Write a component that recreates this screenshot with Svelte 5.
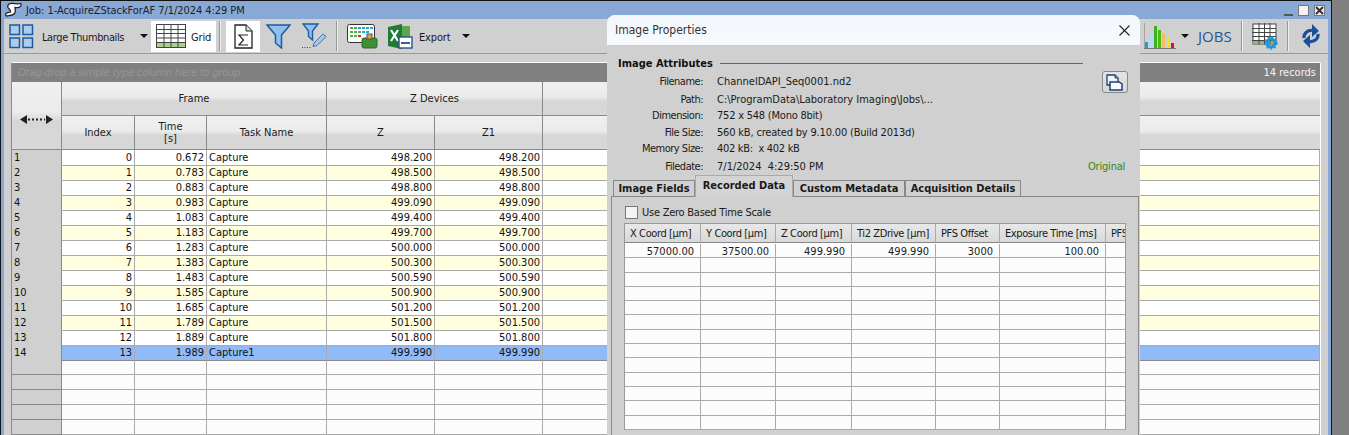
<script>
  const rows = [
    [0, "0.672", "Capture", "498.200"],
    [1, "0.783", "Capture", "498.500"],
    [2, "0.883", "Capture", "498.800"],
    [3, "0.983", "Capture", "499.090"],
    [4, "1.083", "Capture", "499.400"],
    [5, "1.183", "Capture", "499.700"],
    [6, "1.283", "Capture", "500.000"],
    [7, "1.383", "Capture", "500.300"],
    [8, "1.483", "Capture", "500.590"],
    [9, "1.585", "Capture", "500.900"],
    [10, "1.685", "Capture", "501.200"],
    [11, "1.789", "Capture", "501.500"],
    [12, "1.889", "Capture", "501.800"],
    [13, "1.989", "Capture1", "499.990"]
  ];
  const blanks = [0, 1, 2, 3, 4];
  const attrs = [
    ["Filename:", "ChannelDAPI_Seq0001.nd2"],
    ["Path:", "C:\\ProgramData\\Laboratory Imaging\\Jobs\\..."],
    ["Dimension:", "752 x 548 (Mono 8bit)"],
    ["File Size:", "560 kB, created by 9.10.00 (Build 2013d)"],
    ["Memory Size:", "402 kB:  x 402 kB"],
    ["Filedate:", "7/1/2024  4:29:50 PM"]
  ];
  const tabs = ["Image Fields", "Recorded Data", "Custom Metadata", "Acquisition Details"];
  const recCols = ["X Coord [µm]", "Y Coord [µm]", "Z Coord [µm]", "Ti2 ZDrive [µm]", "PFS Offset", "Exposure Time [ms]", "PFS"];
  const recRow = ["57000.00", "37500.00", "499.990", "499.990", "3000", "100.00", ""];
  const recBlanks = [0, 1, 2, 3, 4, 5, 6, 7, 8, 9, 10, 11];
</script>

<div class="page">
  <div class="window">
    <div class="titlebar">
      <svg class="app-icon" width="17" height="16" viewBox="0 0 17 16">
        <path d="M4 2C7 0 12 3 15 1.500c1.200-.5 1.500 2 .5 3-2 1.500-3.500 1-5.500 1 0 2 1 4-.5 6-1.500 2-5 2-7.500 2.500-1.500 0-2-2-.5-3 1.500-.8 2.500-.5 4-1 .5-2-1.500-3-2.500-4.500C2.800 5 2.800 3 4 2z" fill="#fff" stroke="#222" stroke-width="1.300" />
      </svg>
      <span class="job">Job: 1-AcquireZStackForAF 7/1/2024 4:29 PM</span>
      <div class="winbtns">
        <i class="min"></i>
        <i class="max"></i>
        <i class="close">
          <svg width="9" height="9" viewBox="0 0 9 9"><path d="M1 1l7 7M8 1L1 8" stroke="#333" stroke-width="2" /></svg>
        </i>
      </div>
    </div>

    <div class="toolbar">
      <svg class="thumbs" width="25" height="25" viewBox="0 0 25 25">
        <g fill="#a8cdf0" stroke="#1f5a9e" stroke-width="1.500">
          <rect x="1" y="1" width="9.500" height="9.500" />
          <rect x="14" y="1" width="9.500" height="9.500" />
          <rect x="1" y="14" width="9.500" height="9.500" />
          <rect x="14" y="14" width="9.500" height="9.500" />
        </g>
      </svg>
      <span class="tb-label large">Large Thumbnails</span>
      <b class="caret c1"></b>
      <div class="grid-btn">
        <svg width="30" height="24" viewBox="0 0 30 24">
          <rect x="0.500" y="0.500" width="29" height="23" fill="#fff" stroke="#444" />
          <rect x="1" y="18" width="28" height="5" fill="#a9d18e" />
          <path d="M0 5.500h30M0 9.500h30M0 14h30M0 18.500h30M8 0v24M15 0v24M22 0v24" stroke="#444" />
        </svg>
        <span class="tb-label">Grid</span>
      </div>
      <i class="tb-sep s1"></i>
      <div class="sigma-btn">
        <svg width="19" height="25" viewBox="0 0 19 25">
          <path d="M1 1h11l6 6v17H1z" fill="#fff" stroke="#222" stroke-width="1.300" />
          <path d="M12 1v6h6" fill="#ddd" stroke="#222" />
          <path d="M14 11H5l4.500 5L5 21h9" fill="none" stroke="#222" stroke-width="1.200" />
        </svg>
      </div>
      <svg class="funnel" width="25" height="25" viewBox="0 0 25 25">
        <path d="M1 1h23l-8.500 10v13l-6-5V11z" fill="#8fc0f0" stroke="#1f5a9e" stroke-width="1.500" />
      </svg>
      <svg class="funnel2" width="26" height="26" viewBox="0 0 26 26">
        <path d="M1 1h15l-5.500 7v9l-4-3.500V8z" fill="#8fc0f0" stroke="#1f5a9e" stroke-width="1.400" />
        <path d="M12 20l9-9 3 2.500-9 9-4 1z" fill="#a8c8ee" stroke="#4a6f9e" />
        <path d="M0 24.500h9" stroke="#444" stroke-dasharray="1 1.500" />
      </svg>
      <i class="tb-sep s2"></i>
      <svg class="plate" width="31" height="26" viewBox="0 0 31 26">
        <rect x="0.500" y="1.500" width="27" height="18" rx="2" fill="#fff" stroke="#333" />
        <g fill="#4fb04a">
          <rect x="3" y="4" width="3" height="2" /><rect x="7" y="4" width="3" height="2" /><rect x="3" y="8" width="3" height="2" /><rect x="7" y="8" width="3" height="2" /><rect x="11" y="8" width="3" height="2" /><rect x="3" y="12" width="3" height="2" /><rect x="7" y="12" width="3" height="2" />
        </g>
        <g fill="#28a8d8">
          <rect x="11" y="4" width="3" height="2" /><rect x="15" y="4" width="3" height="2" /><rect x="19" y="4" width="3" height="2" /><rect x="23" y="4" width="3" height="2" /><rect x="15" y="8" width="3" height="2" /><rect x="19" y="8" width="3" height="2" />
        </g>
        <rect x="11" y="12" width="3" height="2" fill="#e02030" />
        <rect x="15" y="15" width="15" height="10" rx="2" fill="#3f8f36" stroke="#2a6a24" />
        <rect x="20" y="11" width="5" height="5" fill="#e0a040" stroke="#555" />
      </svg>
      <svg class="excel" width="25" height="25" viewBox="0 0 25 25">
        <path d="M0 3l14-3v25L0 22z" fill="#1e7a34" />
        <rect x="14" y="2" width="8" height="14" fill="#5ba84a" />
        <path d="M3 6l7 11M10 6L3 17" stroke="#fff" stroke-width="2.200" />
        <rect x="11" y="13" width="13" height="11" fill="#fff" stroke="#2a4f8f" stroke-width="1.400" />
        <rect x="13" y="18" width="9" height="2" fill="#2a5faf" />
      </svg>
      <span class="tb-label export">Export</span>
      <b class="caret c2"></b>

      <div class="tb-right">
        <svg width="32" height="26" viewBox="0 0 32 26">
          <rect x="1" y="19" width="3" height="6" fill="#1fa0d8" />
          <rect x="5" y="11" width="4" height="14" fill="#b8d8f8" />
          <rect x="10" y="3" width="3" height="22" fill="#3fb020" />
          <rect x="14" y="7" width="3" height="18" fill="#50b818" />
          <rect x="18" y="11" width="3" height="14" fill="#f0c060" />
          <rect x="23" y="15" width="3" height="10" fill="#f8e020" />
          <rect x="27" y="20" width="3" height="5" fill="#e01020" />
          <path d="M0 0v26M0 25.500h32" stroke="#777" />
        </svg>
        <b class="caret c3"></b>
        <span class="jobs">JOBS</span>
        <i class="tb-sep"></i>
        <svg width="27" height="27" viewBox="0 0 27 27">
          <rect x="1" y="1" width="23" height="20" fill="#fff" stroke="#444" />
          <rect x="1" y="17" width="22" height="4" fill="#8db87a" />
          <path d="M0 5.500h24M0 9.500h24M0 13.500h24M0 17.500h24M7 0v21M12.500 0v21M18 0v21" stroke="#444" />
          <circle cx="19" cy="20" r="4" fill="none" stroke="#1c98d8" stroke-width="3" />
          <circle cx="19" cy="20" r="6" fill="none" stroke="#1c98d8" stroke-width="1.500" stroke-dasharray="2 2" />
        </svg>
        <i class="tb-sep"></i>
        <svg class="refresh" width="20" height="24" viewBox="0 0 20 24">
          <path d="M3 14C2.500 9 7 6 11 6.500M17 10c.5 5-4 8-8 7.500" fill="none" stroke="#1c4f98" stroke-width="3.200" />
          <path d="M11 0l7 7-7 6zM9 11l-7 6 7 7z" fill="#1c4f98" />
        </svg>
      </div>
    </div>

    <div class="content">
      <div class="panel">
        <div class="group-bar">
          <span class="hint">Drag-drop a simple type column here to group</span>
          <span class="records">14 records</span>
        </div>
        <div class="head">
          <div class="corner">
            <svg width="33" height="9" viewBox="0 0 33 9">
              <path d="M0 4.500L7 0v9zM33 4.500L26 0v9z" fill="#222" />
              <path d="M8 4.500h17" stroke="#222" stroke-width="2" stroke-dasharray="2 2" />
            </svg>
          </div>
          <div class="hc frame">Frame</div>
          <div class="hc zdev">Z Devices</div>
          <div class="hc rest1"></div>
          <div class="hc">Index</div>
          <div class="hc two">Time<br />[s]</div>
          <div class="hc">Task Name</div>
          <div class="hc">Z</div>
          <div class="hc">Z1</div>
          <div class="hc rest2"></div>
        </div>
        {#each rows as r, i}
          <div class="row" class:alt={i % 2 === 1 && i !== 13} class:sel={i === 13}>
            <div class="num">{i + 1}</div>
            <div class="r">{r[0]}</div>
            <div class="r">{r[1]}</div>
            <div>{r[2]}</div>
            <div class="r">{r[3]}</div>
            <div class="r">{r[3]}</div>
            <div></div>
          </div>
        {/each}
        {#each blanks as b}
          <div class="row blank" data-n={b}>
            <div class="num"></div>
            <div></div><div></div><div></div><div></div><div></div><div></div>
          </div>
        {/each}
      </div>
    </div>
  </div>

  <div class="dialog">
    <div class="dlg-title">
      <span>Image Properties</span>
      <svg width="11" height="11" viewBox="0 0 11 11"><path d="M.5.500l10 10M10.500.500l-10 10" stroke="#222" stroke-width="1.100" /></svg>
    </div>
    <div class="dlg-body">
      <div class="section">
        <b>Image Attributes</b>
        <i></i>
      </div>
      <div class="attrs">
        {#each attrs as a}
          <div class="lbl">{a[0]}</div>
          <div class="val">{a[1]}</div>
        {/each}
      </div>
      <button class="copy" aria-label="Copy">
        <svg width="18" height="17" viewBox="0 0 18 17">
          <path d="M1 1h8l3 3v5H5v2H1z" fill="#f0f4fb" stroke="#1c3f78" stroke-width="1.300" />
          <path d="M4 8h9l3 2v6H4z" fill="#fff" stroke="#1c3f78" stroke-width="1.500" />
          <path d="M9 1v3h3" fill="#9aa8bc" stroke="#1c3f78" />
        </svg>
      </button>
      <span class="original">Original</span>

      <div class="tab-panel">
        <label class="check"><i></i>Use Zero Based Time Scale</label>
        <div class="rec">
          <div class="rec-row rec-head">
            {#each recCols as c}<div>{c}</div>{/each}
          </div>
          <div class="rec-row">
            {#each recRow as c}<div class="r">{c}</div>{/each}
          </div>
          {#each recBlanks as b}
            <div class="rec-row" data-n={b}>
              {#each recRow as c}<div data-v={c}></div>{/each}
            </div>
          {/each}
        </div>
      </div>
      <div class="tabs">
        {#each tabs as t, i}
          <div class="tab" class:active={i === 1}>{t}</div>
        {/each}
      </div>
    </div>
  </div>
</div>

<style>
  :global(body) {
    margin: 0;
    font-family: "DejaVu Sans", "Liberation Sans", sans-serif;
    font-stretch: condensed;
    font-size: 11px;
    color: #1a1a1a;
  }

  .page {
    position: relative;
    width: 1349px;
    height: 435px;
    overflow: hidden;
    background: #808080;
  }

  .window {
    box-sizing: border-box;
    width: 1332px;
    height: 436px;
    border: 1px solid #111;
    border-bottom: 0;
    background: #88a9d6;
    padding: 0 3px;
    display: flex;
    flex-direction: column;
  }

  .titlebar {
    height: 18px;
    display: flex;
    align-items: center;
    gap: 4px;
    font-size: 11px;
    flex: none;
    padding-left: 1px;
    color: #202020;
  }
  .job { letter-spacing: -0.06px; }

  .winbtns {
    margin-left: auto;
    display: flex;
    align-items: center;
    gap: 5px;
    margin-right: 3px;
  }
  .winbtns i {
    display: flex;
    align-items: center;
    justify-content: center;
    width: 9px;
    height: 9px;
  }
  .winbtns .min {
    height: 2px;
    background: #555;
    margin-top: 9px;
  }
  .winbtns .max {
    background: #f2f2f2;
    border: 1px solid #777;
  }
  .winbtns .close {
    background: #eee;
    border: 1px solid #777;
  }

  .toolbar {
    position: relative;
    height: 35px;
    flex: none;
    background: #d0d0d0;
    border-bottom: 1px solid #999;
    display: flex;
    align-items: center;
    padding-left: 5px;
    box-sizing: border-box;
  }
  .tb-label { font-size: 11px; padding-top: 2px; letter-spacing: -0.15px; }
  .large { margin-left: 8px; width: 98px; letter-spacing: -0.4px; }
  .caret {
    width: 0;
    height: 0;
    border: 4px solid transparent;
    border-top: 4px solid #111;
    border-bottom: 0;
  }
  .grid-btn {
    margin-left: 3px;
    width: 65px;
    height: 31px;
    background: #fff;
    box-sizing: border-box;
    display: flex;
    align-items: center;
    gap: 5px;
    padding-left: 5px;
  }
  .tb-sep {
    width: 2px;
    height: 30px;
    background: linear-gradient(90deg, #999 50%, #eee 50%);
  }
  .s1 { margin-left: 3px; }
  .sigma-btn {
    margin-left: 5px;
    width: 34px;
    height: 31px;
    background: #fff;
    display: flex;
    align-items: center;
    justify-content: center;
  }
  .funnel { margin-left: 6px; }
  .funnel2 { margin-left: 11px; }
  .s2 { margin-left: 8px; }
  .plate { margin-left: 9px; }
  .excel { margin-left: 10px; }
  .export { margin-left: 6px; width: 43px; }
  .tb-right {
    position: absolute;
    left: 1140px;
    top: 2px;
    display: flex;
    align-items: center;
    height: 30px;
  }
  .c3 { margin-left: 5px; }
  .jobs {
    margin-left: 9px;
    font-size: 15px;
    color: #2a5590;
    font-family: "Open Sans", sans-serif;
    margin-right: 9px;
    font-stretch: normal;
  }
  .tb-right .tb-sep { margin-right: 9px; }
  .tb-right svg + .tb-sep { margin-left: 8px; }
  .refresh { margin-left: 3px; }

  .content {
    flex: 1;
    min-height: 0;
    background: #d0d0d0;
    padding: 8px 7px 0;
    overflow: hidden;
  }

  .panel {
    width: 1310px;
    box-sizing: border-box;
    border: 1px solid #fff;
    border-left-color: #8a8a8a;
    border-radius: 2px 2px 0 0;
    background: #fff;
  }

  .group-bar {
    height: 19px;
    background: #808080;
    display: flex;
    align-items: center;
    justify-content: space-between;
    padding: 0 4px 0 6px;
  }
  .hint { color: #969696; font-style: italic; letter-spacing: -0.2px; }
  .records { color: #f4f4f4; }

  .head,
  .row {
    display: grid;
    grid-template-columns: 50px 73px 72px 120px 108px 108px 1fr;
  }

  .head {
    grid-template-rows: 34px 34px;
  }
  .hc,
  .corner {
    box-sizing: border-box;
    border-right: 1px solid #8a8a8a;
    border-bottom: 1px solid #8a8a8a;
    background: linear-gradient(#f0f0f0 0, #ebebeb 45%, #d6d6d6 60%, #d8d8d8 100%);
    display: flex;
    align-items: center;
    justify-content: center;
    text-align: center;
    line-height: 12px;
  }
  .corner {
    grid-row: 1 / 3;
    grid-column: 1;
    padding-top: 8px;
  }
  .frame { grid-column: 2 / 5; }
  .zdev { grid-column: 5 / 7; }
  .rest1 { grid-column: 7; border-right: 0; }
  .rest2 { border-right: 0; }

  .row {
    height: 15px;
    line-height: 14px;
    background: #fff;
    color: #111;
  }
  .row > div {
    box-sizing: border-box;
    border-right: 1px solid #aaa;
    border-bottom: 1px solid #aaa;
    padding: 1px 2px 0;
    white-space: nowrap;
  }
  .row .r { text-align: right; }
  .row .num {
    background: #d0d0d0;
    padding-left: 2px;
    border-right-color: #8a8a8a;
    border-bottom-color: #8a8a8a;
  }
  .alt { background: #ffffe0; }
  .sel { background: #90bbf8; }
  .sel > div { border-bottom-color: #8a8a8a; }
  .blank { background: #fcfcfc; }

  .dialog {
    position: absolute;
    left: 607px;
    top: 15px;
    width: 533px;
    height: 430px;
    border-radius: 8px 8px 0 0;
    background: #d0d0d0;
    overflow: hidden;
  }
  .dlg-title {
    height: 30px;
    background: linear-gradient(#f2f7fc, #f7fafd);
    display: flex;
    align-items: center;
    justify-content: space-between;
    padding: 0 10px 0 8px;
    font-size: 12px;
    color: #333;
    box-sizing: border-box;
  }
  .dlg-body {
    position: relative;
    height: 400px;
  }
  .section {
    position: absolute;
    left: 11px;
    top: 12px;
    display: flex;
    align-items: center;
    gap: 7px;
    width: 465px;
    color: #111;
  }
  .section i {
    flex: 1;
    height: 1px;
    background: #666;
  }
  .attrs {
    position: absolute;
    left: 0;
    top: 28px;
    display: grid;
    grid-template-columns: 96px 1fr;
    grid-template-rows: 18px 16px 17px 16px 18px 17px;
    column-gap: 14px;
    line-height: 17px;
    width: 480px;
  }
  .lbl { text-align: right; letter-spacing: -0.5px; }
  .val { white-space: pre; }
  .val:nth-child(6) { letter-spacing: -0.22px; }
  .val:nth-child(8) { letter-spacing: -0.18px; }
  .val:nth-child(10) { letter-spacing: -0.3px; }
  .copy {
    position: absolute;
    left: 495px;
    top: 26px;
    width: 26px;
    height: 22px;
    padding: 0;
    border: 1px solid #888;
    border-radius: 3px;
    background: linear-gradient(#e4e4e4, #d8d8d8);
    display: flex;
    align-items: center;
    justify-content: center;
  }
  .original {
    position: absolute;
    left: 481px;
    top: 115px;
    color: #2a8a1a;
    letter-spacing: -0.2px;
  }
  .tabs {
    position: absolute;
    left: 6px;
    top: 130px;
    display: grid;
    grid-template-columns: 82px 98px 112px 116px;
    align-items: end;
    height: 22px;
  }
  .tab {
    box-sizing: border-box;
    height: 17px;
    border: 1px solid #888;
    border-bottom: 1px solid #888;
    font-weight: bold;
    line-height: 15px;
    background: #d0d0d0;
    white-space: nowrap;
    text-align: center;
  }
  .tab.active {
    height: 22px;
    background: #d4d4d4;
    border-color: #aaa;
    border-bottom: 0;
    line-height: 19px;
  }
  .tab-panel {
    position: absolute;
    left: 4px;
    top: 151px;
    width: 528px;
    height: 300px;
    box-sizing: border-box;
    border: 1px solid #888;
    padding: 8px 12px;
  }
  .check {
    display: flex;
    align-items: center;
    gap: 4px;
    height: 14px;
    margin-left: 1px;
    letter-spacing: -0.25px;
  }
  .check i {
    width: 11px;
    height: 11px;
    background: #f4f4f4;
    border: 1px solid #777;
  }
  .rec {
    margin-top: 4px;
    width: 502px;
    border: 1px solid #999;
    border-bottom: 0;
    box-sizing: border-box;
    overflow: hidden;
    background: #fcfcfc;
  }
  .rec-row {
    display: grid;
    grid-template-columns: 76px 75px 76px 84px 64px 106px 90px;
    height: 14.300px;
    line-height: 15px;
    width: 570px;
  }
  .rec-row > div {
    box-sizing: border-box;
    border-right: 1px solid #aaa;
    border-bottom: 1px solid #aaa;
    padding: 0 2px;
    white-space: nowrap;
    overflow: hidden;
  }
  .rec-row .r { text-align: right; padding-right: 6px; }
  .rec-head {
    height: 19px;
    margin-bottom: 1px;
    background: linear-gradient(#e8e8e8, #d8d8d8);
    line-height: 20px;
  }
  .rec-head > div { padding: 0 4px 0 5px; border-bottom-color: #888; letter-spacing: -0.4px; }
</style>
